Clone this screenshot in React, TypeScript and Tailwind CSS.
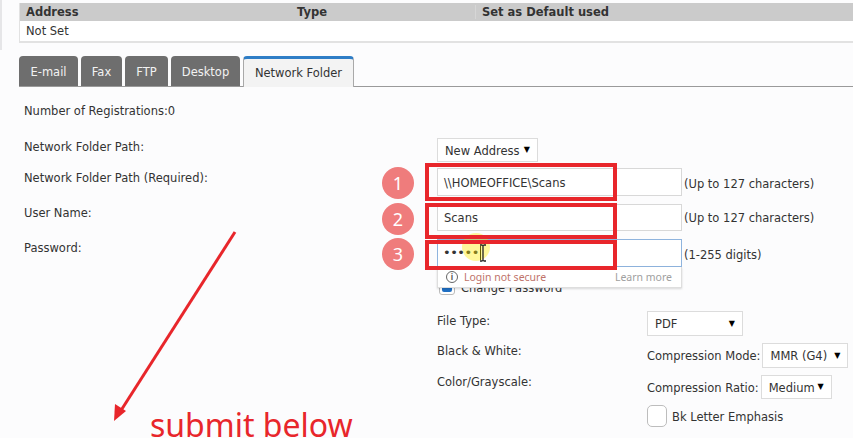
import React from "react";

function Caret() {
  return <span className="text-[8px] leading-none text-black">▼</span>;
}

function Select({ label, w, h }: { label: string; w: string; h: string }) {
  return (
    <div className={`${w} ${h} flex items-center justify-between border border-[#dcdcdc] bg-white pl-[7px] pr-[7px]`}>
      <span className="pt-[1px]">{label}</span>
      <Caret />
    </div>
  );
}

export default function App() {
  const tabs = [
    { t: "E-mail", w: "w-[59px]" },
    { t: "Fax", w: "w-[41px]" },
    { t: "FTP", w: "w-[43px]" },
    { t: "Desktop", w: "w-[69px]" },
  ];
  return (
    <div className="relative h-[438px] w-[853px] overflow-hidden bg-[#fcfcfd] font-['DejaVu_Sans',sans-serif] text-[11.5px] leading-[14px] text-[#333]">
      <div className="absolute left-0 top-0 h-[50px] w-[2px] bg-[#e6e6e8]" />
      <div className="pl-[19px] pt-[3px]">
        {/* table */}
        <div className="border-b-2 border-l border-[#e2e2e2]">
          <div className="grid h-[18px] grid-cols-[272px_183px_1fr] items-center bg-[#cbcbcb] font-bold text-[#333]">
            <div className="pl-[6px]">Address</div>
            <div className="pl-[5px]">Type</div>
            <div className="border-l border-[#d6d6d6] pl-[6px]">Set as Default used</div>
          </div>
          <div className="flex h-[20px] items-center bg-white pl-[6px]">Not Set</div>
        </div>

        {/* tabs */}
        <div className="mt-[13px] flex h-[31px] items-end gap-[3px] border-b border-[#9a9a9a]">
          {tabs.map((x) => (
            <div
              key={x.t}
              className={`${x.w} flex h-[30px] items-center justify-center rounded-t-[4px] bg-[#6e6e6e] pt-[1px] text-[#f2f2f2]`}
            >
              {x.t}
            </div>
          ))}
          <div className="mb-[-1px] flex h-[31px] w-[111px] items-center justify-center rounded-t-[4px] border-x border-t-[3px] border-[#a9a9a9] border-t-[#2e7dc6] bg-[#f3f3f3] text-[#333]">
            Network Folder
          </div>
        </div>

        {/* form */}
        <div className="pl-[5px]">
          <div className="mt-[17px]">Number of Registrations:0</div>

          <div className="mt-[20px] flex h-[24px]">
            <div className="w-[413px] pt-[2px]">Network Folder Path:</div>
            <Select label="New Address" w="w-[101px]" h="h-[24px]" />
          </div>

          <div className="mt-[6px] flex h-[28px]">
            <div className="w-[413px] pt-[3px]">Network Folder Path (Required):</div>
            <div className="flex h-[28px] w-[245px] items-center border border-[#d8d8d8] bg-white pl-[6px] pt-[1px]">\\HOMEOFFICE\Scans</div>
            <div className="ml-[2px] self-center pt-[3px]">(Up to 127 characters)</div>
          </div>

          <div className="mt-[8px] flex h-[27px]">
            <div className="w-[413px] pt-[2px]">User Name:</div>
            <div className="flex h-[27px] w-[245px] items-center border border-[#d8d8d8] bg-white pl-[6px] pt-[1px]">Scans</div>
            <div className="ml-[2px] self-center pt-[1px]">(Up to 127 characters)</div>
          </div>

          <div className="mt-[8px] flex h-[28px]">
            <div className="w-[413px] pt-[2px]">Password:</div>
            <div className="flex h-[28px] w-[245px] items-center border border-[#8fb4de] bg-white pl-[5px]">
              <span className="text-[13px] tracking-[-0.5px]">•••••</span>
              <span className="ml-[1px] h-[14px] w-[1px] bg-black" />
            </div>
            <div className="ml-[2px] self-center pt-[3px]">(1-255 digits)</div>
          </div>

          <div className="mt-[12px] flex h-[16px] pl-[415px]">
            <div className="flex h-[16px] w-[16px] items-center justify-center rounded-[3px] border border-[#bbb] bg-white">
              <div className="h-[10px] w-[10px] rounded-[2px] bg-[#1f6fc4]" />
            </div>
            <div className="ml-[6px] pt-[2px]">Change Password</div>
          </div>

          <div className="ml-[413px] mt-[16px]">
            <div className="flex h-[25px]">
              <div className="w-[210px] pt-[3px]">File Type:</div>
              <Select label="PDF" w="w-[96px]" h="h-[25px]" />
            </div>
            <div className="mt-[7px] flex h-[25px]">
              <div className="w-[210px] pt-[1px]">Black &amp; White:</div>
              <div className="flex items-center">
                <span className="pt-[1px]">Compression Mode:</span>
                <div className="ml-[2px]">
                  <Select label="MMR (G4)" w="w-[86px]" h="h-[25px]" />
                </div>
              </div>
            </div>
            <div className="mt-[7px] flex h-[24px]">
              <div className="w-[210px]">Color/Grayscale:</div>
              <div className="flex items-center">
                <span className="pt-[1px]">Compression Ratio:</span>
                <div className="ml-[2px]">
                  <Select label="Medium" w="w-[71px]" h="h-[24px]" />
                </div>
              </div>
            </div>
            <div className="mt-[6px] flex h-[22px] items-center pl-[210px]">
              <div className="h-[22px] w-[20px] rounded-[5px] border border-[#bdbdbd] bg-white" />
              <span className="ml-[5px] pt-[1px]">Bk Letter Emphasis</span>
            </div>
          </div>
        </div>
      </div>

      {/* browser autofill popup */}
      <div className="absolute left-[437px] top-[267px] flex h-[21px] w-[245px] items-center justify-between border-x border-b border-[#dedede] bg-white pl-[8px] pr-[9px] font-['Noto_Sans',sans-serif] text-[10.5px] shadow-[0_1px_2px_rgba(0,0,0,0.15)]">
        <div className="flex items-center gap-[6px]">
          <span className="flex h-[12px] w-[12px] items-center justify-center rounded-full border border-[#666] text-[8px] font-bold leading-none text-[#555]">i</span>
          <span className="text-[#c0736a]">Login not secure</span>
        </div>
        <span className="text-[#a0a0a0]">Learn more</span>
      </div>

      {/* annotations */}
      <div className="absolute left-[462px] top-[233px] h-[28px] w-[28px] rounded-full bg-[rgba(255,236,0,0.4)]" />
      <svg className="absolute left-[478px] top-[244px]" width="10" height="18" viewBox="0 0 10 18">
        <path d="M2 1h2.5M5.5 1H8M5 1v16M2 17h2.5M5.5 17H8" stroke="#222" strokeWidth="1.3" fill="none" />
      </svg>

      <div className="absolute left-[425px] top-[163px] h-[38px] w-[192px] border-4 border-[#e8262b]" />
      <div className="absolute left-[425px] top-[203px] h-[36px] w-[192px] border-4 border-[#e8262b]" />
      <div className="absolute left-[425px] top-[240px] h-[30px] w-[192px] border-4 border-[#e8262b]" />

      {["1", "2", "3"].map((n, i) => (
        <div
          key={n}
          className={`absolute left-[382px] flex h-[32px] w-[32px] items-center justify-center rounded-full bg-[#ef7c7c] font-['Noto_Sans',sans-serif] text-[18px] text-white ${
            i === 0 ? "top-[167px]" : i === 1 ? "top-[203px]" : "top-[238px]"
          }`}
        >
          {n}
        </div>
      ))}

      <svg className="absolute left-0 top-0" width="853" height="438" viewBox="0 0 853 438">
        <line x1="235" y1="232" x2="120" y2="412" stroke="#e8262b" strokeWidth="3" />
        <path d="M114 421 L115 404 L126 411 Z" fill="#e8262b" />
      </svg>

      <div className="absolute left-[150px] top-[405px] font-['Noto_Sans',sans-serif] text-[32px] leading-[40px] text-[#e8262b]">
        submit below
      </div>
    </div>
  );
}
